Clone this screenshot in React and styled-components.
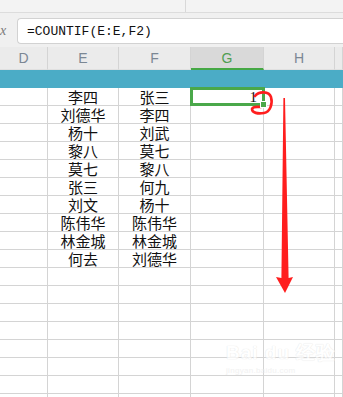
import React from 'react'
import styled, { createGlobalStyle } from 'styled-components'

const GlobalStyle = createGlobalStyle`
html, body{
    margin: 0;
    padding: 0;
    background: #ffffff;
}
body{
    width: 343px;
    height: 397px;
    overflow: hidden;
    font-family: "Noto Sans CJK SC", "Liberation Sans", sans-serif;
}
`

const cols = [48, 71, 72, 73, 71, 8]

const Page = styled.div`
position: relative;
width: 343px;
height: 397px;
overflow: hidden;
background: #ffffff;
`

const TopStrip = styled.div`
height: 12px;
background: #f3f3f3;
border-bottom: 1px solid #dcdcdc;
display: flex;
& > div{
    width: 185px;
    border-right: 1px solid #d8d8d8;
}
`

const FormulaBar = styled.div`
height: 34px;
background: #f0f0f0;
display: flex;
align-items: center;
padding-top: 2px;
box-sizing: border-box;
`

const FxLabel = styled.span`
width: 10px;
font-family: "Liberation Serif", serif;
font-style: italic;
font-size: 14px;
color: #7a7a7a;
`

const FormulaInput = styled.div`
flex: 1;
height: 24px;
margin-left: 7px;
background: #ffffff;
border: 1px solid #d2d2d2;
border-right: none;
border-radius: 4px 0 0 4px;
display: flex;
align-items: center;
padding-left: 9px;
font-family: "Liberation Mono", monospace;
font-size: 13px;
color: #111111;
`

const Grid = styled.div`
display: grid;
grid-template-columns: ${cols.map(c => c + 'px').join(' ')};
`

const HeadCell = styled.div`
height: 23px;
box-sizing: border-box;
display: flex;
align-items: center;
justify-content: center;
font-family: "Liberation Sans", sans-serif;
font-size: 14px;
color: ${p => p.$active ? '#4f9e52' : '#7b8794'};
background: ${p => p.$active ? '#d9d9d9' : '#ebebeb'};
border-right: 1px solid #d4d4d4;
border-bottom: ${p => p.$active ? '2px solid #45a845' : '1px solid #e0e0e0'};
padding-left: ${p => p.$shift || 0}px;
`

const TealBand = styled.div`
height: 18px;
background: #4bacc6;
`

const Cell = styled.div`
position: relative;
height: 18px;
box-sizing: border-box;
border-right: 1px solid #d4d4d4;
border-bottom: 1px solid #d4d4d4;
display: flex;
align-items: center;
justify-content: ${p => p.$right ? 'flex-end' : 'center'};
padding-right: ${p => p.$right ? '6px' : '0'};
font-size: 15px;
line-height: 18px;
color: #111111;
${p => p.$right && `font-family: "Liberation Serif", serif;`}
${p => p.$selected && `
    &::after{
        content: '';
        position: absolute;
        left: -1px;
        top: -1px;
        right: -2px;
        bottom: -1px;
        border: 3px solid #4aa84a;
    }
    &::before{
        content: '';
        position: absolute;
        right: -4px;
        bottom: -3px;
        width: 5px;
        height: 5px;
        background: #4aa84a;
        border: 1px solid #ffffff;
        z-index: 2;
    }
`}
`

const Overlay = styled.svg`
position: absolute;
left: 0;
top: 0;
pointer-events: none;
`

const Watermark = styled.div`
position: absolute;
left: 226px;
top: 343px;
color: #ffffff;
text-shadow: 0 0 1px #dedede, 0 0 1px #e2e2e2;
font-family: "Liberation Sans", sans-serif;
line-height: 1;
opacity: 0.7;
& > p{
    margin: 0;
    font-size: 19px;
    font-weight: bold;
    letter-spacing: 1px;
}
& > span{
    display: block;
    margin-top: 5px;
    font-size: 8px;
    letter-spacing: 0.3px;
    color: #ececec;
    text-shadow: none;
}
`

const pairs = [
    ['李四', '张三'],
    ['刘德华', '李四'],
    ['杨十', '刘武'],
    ['黎八', '莫七'],
    ['莫七', '黎八'],
    ['张三', '何九'],
    ['刘文', '杨十'],
    ['陈伟华', '陈伟华'],
    ['林金城', '林金城'],
    ['何去', '刘德华'],
]

const rows = Array.from({ length: 18 }, (_, i) => pairs[i] || ['', ''])

function App() {
    return (
        <Page>
            <GlobalStyle />
            <TopStrip><div /></TopStrip>
            <FormulaBar>
                <FxLabel>x</FxLabel>
                <FormulaInput>=COUNTIF(E:E,F2)</FormulaInput>
            </FormulaBar>
            <Grid>
                <HeadCell $shift={-26}>D</HeadCell>
                <HeadCell>E</HeadCell>
                <HeadCell>F</HeadCell>
                <HeadCell $active>G</HeadCell>
                <HeadCell>H</HeadCell>
                <HeadCell />
            </Grid>
            <TealBand />
            <Grid>
                {rows.map((r, i) => (
                    <React.Fragment key={i}>
                        <Cell />
                        <Cell>{r[0]}</Cell>
                        <Cell>{r[1]}</Cell>
                        <Cell $right $selected={i === 0}>{i === 0 ? '1' : ''}</Cell>
                        <Cell />
                        <Cell />
                    </React.Fragment>
                ))}
            </Grid>
            <Watermark>
                <p>Bai du 经验</p>
                <span>jingyan.baidu.com</span>
            </Watermark>
            <Overlay width="343" height="397" viewBox="0 0 343 397">
                <path d="M255 96 C259 91, 269 91, 271 97 C273 104, 270 112, 264 113 C258 114, 252 113, 252 109 C253 106, 257 107, 261 107"
                    fill="none" stroke="#ff1e1e" strokeWidth="2.6" strokeLinecap="round" />
                <polygon points="283.4,98 285,98 288.6,278 293,277 285,293 276,277 281.4,278" fill="#ff1e1e" />
            </Overlay>
        </Page>
    )
}

export default App
